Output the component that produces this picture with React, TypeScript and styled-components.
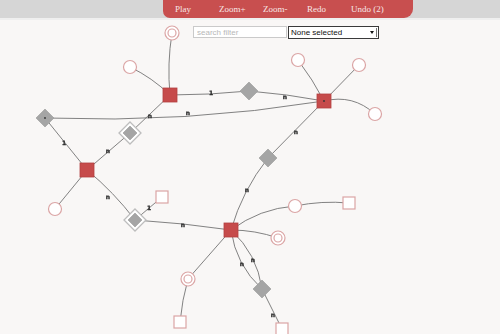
import React from 'react';
import styled, {createGlobalStyle} from 'styled-components';

type Kind = 'entity' | 'attr' | 'multi' | 'rel' | 'weak' | 'key';

type GraphNode = {x: number, y: number, kind: Kind, dot?: boolean};

type GraphEdge = {
    from: string,
    to: string,
    bend?: number,
    label?: {text: string, x: number, y: number}
};

const nodes: Record<string, GraphNode> = {
    A: {x: 172, y: 33, kind: 'multi'},
    B: {x: 130, y: 67, kind: 'attr'},
    C: {x: 170, y: 95, kind: 'entity'},
    D: {x: 249, y: 91, kind: 'rel'},
    E: {x: 324, y: 101, kind: 'entity', dot: true},
    F: {x: 298, y: 60, kind: 'attr'},
    G: {x: 359, y: 65, kind: 'attr'},
    H: {x: 375, y: 114, kind: 'attr'},
    I: {x: 45, y: 118, kind: 'rel', dot: true},
    J: {x: 130, y: 133, kind: 'weak'},
    K: {x: 87, y: 170, kind: 'entity'},
    L: {x: 55, y: 209, kind: 'attr'},
    M: {x: 268, y: 158, kind: 'rel'},
    N: {x: 162, y: 197, kind: 'key'},
    O: {x: 135, y: 220, kind: 'weak'},
    P: {x: 231, y: 230, kind: 'entity'},
    Q: {x: 295, y: 206, kind: 'attr'},
    R: {x: 349, y: 203, kind: 'key'},
    S: {x: 278, y: 238, kind: 'multi'},
    T: {x: 188, y: 279, kind: 'multi'},
    U: {x: 262, y: 289, kind: 'rel'},
    V: {x: 180, y: 322, kind: 'key'},
    W: {x: 282, y: 329, kind: 'key'},
};

const edges: GraphEdge[] = [
    {from: 'A', to: 'C', bend: 2},
    {from: 'B', to: 'C', bend: -2},
    {from: 'C', to: 'D', bend: 1, label: {text: '1', x: 211, y: 93}},
    {from: 'D', to: 'E', bend: -1, label: {text: 'n', x: 285, y: 97}},
    {from: 'I', to: 'E', bend: 7, label: {text: 'n', x: 188, y: 113}},
    {from: 'C', to: 'J', label: {text: 'n', x: 150, y: 116}},
    {from: 'I', to: 'K', label: {text: '1', x: 64, y: 143}},
    {from: 'J', to: 'K', label: {text: 'n', x: 108, y: 151}},
    {from: 'K', to: 'L'},
    {from: 'K', to: 'O', bend: -2, label: {text: 'n', x: 108, y: 197}},
    {from: 'O', to: 'N', label: {text: '1', x: 149, y: 208}},
    {from: 'O', to: 'P', bend: -1, label: {text: 'n', x: 183, y: 225}},
    {from: 'E', to: 'F', bend: 1},
    {from: 'E', to: 'G'},
    {from: 'E', to: 'H', bend: -7},
    {from: 'E', to: 'M', label: {text: 'n', x: 296, y: 132}},
    {from: 'P', to: 'M', bend: -4, label: {text: 'n', x: 247, y: 190}},
    {from: 'P', to: 'Q', bend: -5},
    {from: 'Q', to: 'R', bend: -2},
    {from: 'P', to: 'S', bend: -2},
    {from: 'P', to: 'T'},
    {from: 'T', to: 'V', bend: 1},
    {from: 'P', to: 'U', bend: 6, label: {text: 'n', x: 242, y: 264}},
    {from: 'P', to: 'U', bend: -6, label: {text: 'n', x: 253, y: 260}},
    {from: 'U', to: 'W', label: {text: 'n', x: 273, y: 315}},
];

const toolbar = ['Play', 'Zoom+', 'Zoom-', 'Redo', 'Undo (2)'];

const edgePath = (e: GraphEdge) => {
    const a = nodes[e.from];
    const b = nodes[e.to];
    const mx = (a.x + b.x) / 2;
    const my = (a.y + b.y) / 2;
    const len = Math.hypot(b.x - a.x, b.y - a.y) || 1;
    const bend = e.bend || 0;
    const cx = mx - (b.y - a.y) / len * bend * 2;
    const cy = my + (b.x - a.x) / len * bend * 2;
    return `M${a.x} ${a.y} Q${cx} ${cy} ${b.x} ${b.y}`;
};

const diamond = (x: number, y: number, r: number) =>
    `${x},${y - r} ${x + r},${y} ${x},${y + r} ${x - r},${y}`;

const GraphNodeShape = ({n}: { n: GraphNode }) => {
    switch (n.kind) {
        case 'entity':
            return <g>
                <EntityRect x={n.x - 7} y={n.y - 7} width={14} height={14}/>
                {n.dot && <NodeDot cx={n.x} cy={n.y} r={0.9}/>}
            </g>;
        case 'attr':
            return <AttrCircle cx={n.x} cy={n.y} r={6.5}/>;
        case 'multi':
            return <g>
                <AttrCircle cx={n.x} cy={n.y} r={7}/>
                <AttrCircle cx={n.x} cy={n.y} r={4}/>
            </g>;
        case 'key':
            return <AttrRect x={n.x - 6} y={n.y - 6} width={12} height={12}/>;
        case 'rel':
            return <g>
                <RelShape points={diamond(n.x, n.y, 9)}/>
                {n.dot && <NodeDot cx={n.x} cy={n.y} r={0.9}/>}
            </g>;
        case 'weak':
            return <g>
                <WeakOuter points={diamond(n.x, n.y, 11)}/>
                <RelShape points={diamond(n.x, n.y, 7)}/>
            </g>;
    }
};

export default function App() {
    return (
        <Page>
            <GlobalStyle/>
            <TopBar>
                <Tab>
                    {toolbar.map(t => <TabItem key={t}>{t}</TabItem>)}
                </Tab>
            </TopBar>
            <Workspace>
                <GraphCanvas viewBox="0 20 500 314" preserveAspectRatio="xMinYMin meet">
                    {edges.map((e, i) => <EdgePath key={i} d={edgePath(e)}/>)}
                    {Object.entries(nodes).map(([id, n]) => <GraphNodeShape key={id} n={n}/>)}
                    {edges.filter(e => e.label).map((e, i) => (
                        <EdgeLabel key={i} x={e.label!.x} y={e.label!.y + 2}>{e.label!.text}</EdgeLabel>
                    ))}
                </GraphCanvas>
                <FilterRow>
                    <SearchInput placeholder="search filter"/>
                    <SelectBox>
                        <Select defaultValue="none">
                            <option value="none">None selected</option>
                        </Select>
                        <SelectArrow/>
                    </SelectBox>
                </FilterRow>
            </Workspace>
        </Page>
    );
}

const GlobalStyle = createGlobalStyle`
  html, body {
    margin: 0;
    padding: 0;
    background: #f9f7f6;
  }

  body {
    font-family: 'Liberation Sans', Arial, sans-serif;
    overflow: hidden;
  }
`;

const Page = styled.div`
  width: 500px;
  height: 334px;
  display: flex;
  flex-direction: column;
  background: #f9f7f6;
`;

const TopBar = styled.div`
  height: 18px;
  flex-shrink: 0;
  display: flex;
  padding-left: 163px;
  background: #d6d6d6;
  border-bottom: 2px solid #efefef;
`;

const Tab = styled.nav`
  width: 250px;
  height: 18px;
  box-sizing: border-box;
  display: flex;
  align-items: center;
  padding: 0 0 1px 12px;
  background: #c84f4f;
  border-radius: 0 0 9px 7px;
`;

const TabItem = styled.span`
  width: 44px;
  flex-shrink: 0;
  font-family: 'Liberation Serif', 'Times New Roman', serif;
  font-size: 9px;
  color: #f7e6e6;
  white-space: nowrap;
`;

const Workspace = styled.div`
  position: relative;
  flex: 1;
`;

const GraphCanvas = styled.svg`
  position: absolute;
  inset: 0;
  width: 100%;
  height: 100%;
  will-change: transform;
`;

const EdgePath = styled.path`
  fill: none;
  stroke: #747474;
  stroke-width: 0.9;
`;

const EntityRect = styled.rect`
  fill: #c64b4b;
  stroke: #b34040;
  stroke-width: 0.8;
`;

const NodeDot = styled.circle`
  fill: #333;
`;

const AttrCircle = styled.circle`
  fill: #fff;
  stroke: #dba5a5;
  stroke-width: 1.2;
`;

const AttrRect = styled.rect`
  fill: #fff;
  stroke: #dba5a5;
  stroke-width: 1.2;
`;

const RelShape = styled.polygon`
  fill: #a5a5a5;
  stroke: #9a9a9a;
  stroke-width: 0.6;
`;

const WeakOuter = styled.polygon`
  fill: #fff;
  stroke: #bdbdbd;
  stroke-width: 1.3;
`;

const EdgeLabel = styled.text`
  font-family: 'DejaVu Sans', sans-serif;
  font-size: 6px;
  font-weight: bold;
  fill: #2a2a2a;
  stroke: #2a2a2a;
  stroke-width: 0.3;
  text-anchor: middle;
`;

const FilterRow = styled.div`
  position: relative;
  display: flex;
  padding: 6px 0 0 193px;
`;

const SearchInput = styled.input`
  width: 94px;
  height: 12px;
  box-sizing: border-box;
  margin: 0;
  padding: 0 3px;
  border: 1px solid #cacaca;
  background: #fff;
  font-family: 'Liberation Sans', Arial, sans-serif;
  font-size: 8px;
  outline: none;

  &::placeholder {
    color: #b8b8b8;
  }
`;

const SelectBox = styled.div`
  position: relative;
  width: 91px;
  height: 13px;
  margin-left: 1px;
  box-sizing: border-box;
  border: 1px solid #3a3a3a;
  background: #fff;
`;

const Select = styled.select`
  display: block;
  appearance: none;
  width: 100%;
  height: 11px;
  margin: 0;
  padding: 0 2px;
  border: none;
  border-radius: 0;
  background: transparent;
  font-family: 'Liberation Sans', Arial, sans-serif;
  font-size: 8px;
  line-height: 11px;
  color: #111;
  outline: none;
`;

const SelectArrow = styled.span`
  position: absolute;
  right: 1px;
  top: 1px;
  width: 7px;
  height: 9px;
  border-right: 1px solid #777;

  &::after {
    content: '';
    position: absolute;
    left: 1px;
    top: 3px;
    border-left: 2.5px solid transparent;
    border-right: 2.5px solid transparent;
    border-top: 3px solid #111;
  }
`;
